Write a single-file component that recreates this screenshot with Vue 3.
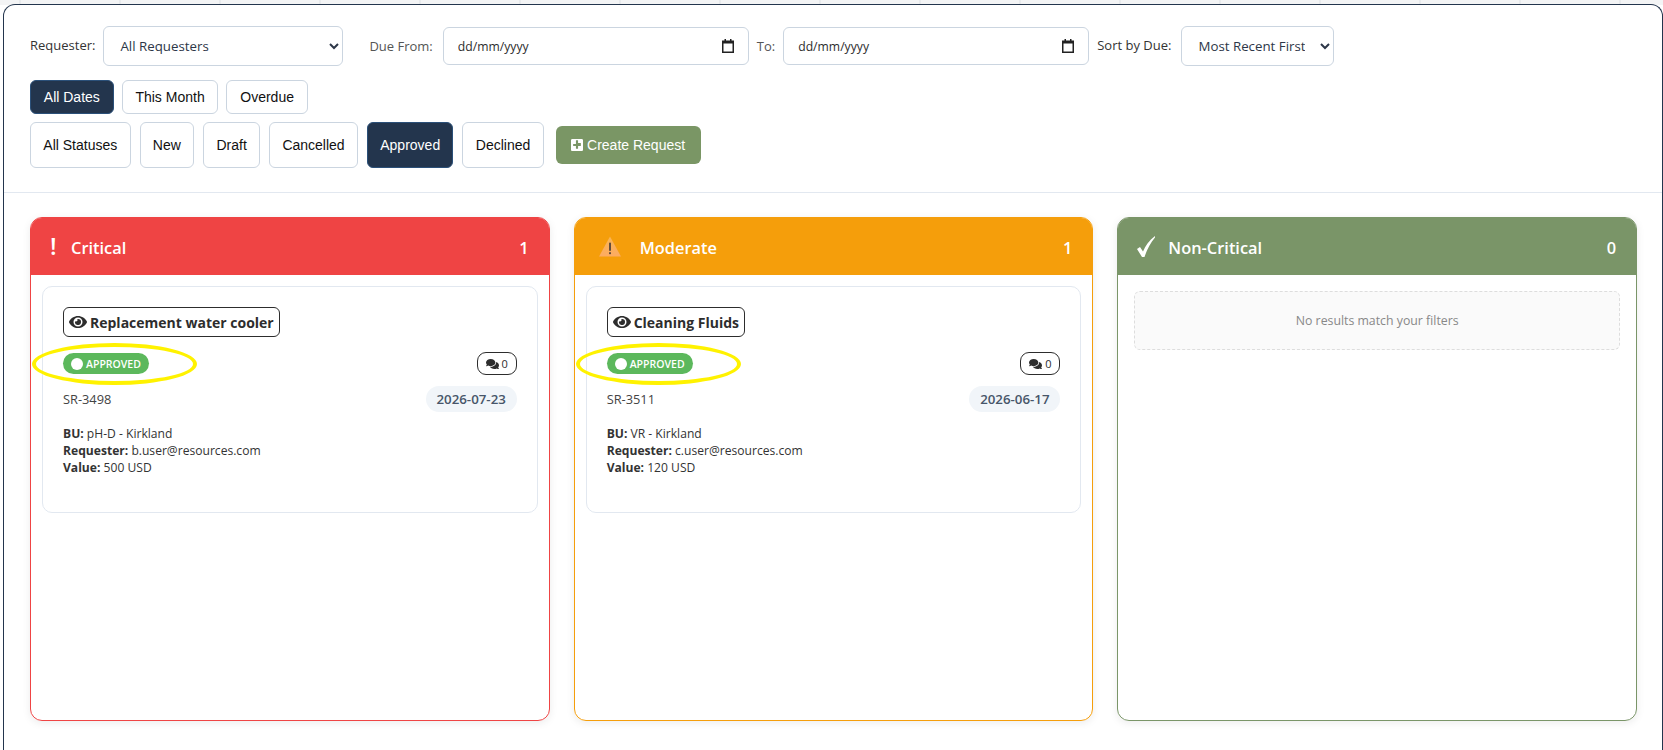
<template>
  <div class="panel">
    <div class="filters">
      <div class="filter-row top">
        <label class="lbl">Requester:</label>
        <select class="sel sel-req">
          <option>All Requesters</option>
        </select>
        <label class="lbl lbl-low due-from">Due From:</label>
        <div class="date-field">
          <input class="date-text" type="text" placeholder="dd/mm/yyyy" />
          <svg class="cal" viewBox="0 0 12 14" width="12" height="14">
            <path d="M2.5 0h1.5v1.500h4V0h1.500v1.500H12V14H0V1.500h2.500zM1.500 4.500V12.500h9V4.500z" fill="#222" />
          </svg>
        </div>
        <label class="lbl lbl-low to">To:</label>
        <div class="date-field">
          <input class="date-text" type="text" placeholder="dd/mm/yyyy" />
          <svg class="cal" viewBox="0 0 12 14" width="12" height="14">
            <path d="M2.5 0h1.5v1.500h4V0h1.500v1.500H12V14H0V1.500h2.500zM1.500 4.500V12.500h9V4.500z" fill="#222" />
          </svg>
        </div>
        <label class="lbl sort">Sort by Due:</label>
        <select class="sel sel-sort">
          <option>Most Recent First</option>
        </select>
      </div>

      <div class="filter-row dates">
        <button v-for="d in dateFilters" :key="d" class="chip" :class="{ active: d === 'All Dates' }">{{ d }}</button>
      </div>

      <div class="filter-row statuses">
        <button v-for="s in statusFilters" :key="s" class="chip tall" :class="{ active: s === 'Approved' }">{{ s }}</button>
        <button class="create">
          <svg viewBox="0 0 448 512" width="12" height="14">
            <path fill="#fff" d="M400 32H48C21.5 32 0 53.5 0 80v352c0 26.5 21.5 48 48 48h352c26.5 0 48-21.5 48-48V80c0-26.5-21.5-48-48-48zm-32 252c0 6.6-5.4 12-12 12h-92v92c0 6.6-5.4 12-12 12h-56c-6.6 0-12-5.4-12-12v-92H92c-6.6 0-12-5.4-12-12v-56c0-6.6 5.4-12 12-12h92V92c0-6.6 5.4-12 12-12h56c6.6 0 12 5.4 12 12v92h92c6.6 0 12 5.4 12 12v56z" />
          </svg>
          Create Request
        </button>
      </div>
    </div>

    <div class="board">
      <section v-for="col in columns" :key="col.name" class="column" :class="col.cls">
        <header class="col-head">
          <div class="col-title">
            <span v-if="col.cls === 'critical'" class="bang">!</span>
            <svg v-else-if="col.cls === 'moderate'" class="warn" viewBox="0 0 24 22" width="24" height="21">
              <defs>
                <linearGradient id="warnFill" x1="0" y1="0" x2="0" y2="1">
                  <stop offset="0" stop-color="#f9b552" />
                  <stop offset="1" stop-color="#fdab62" />
                </linearGradient>
              </defs>
              <path d="M12 0.500L23.500 21.500H0.500z" fill="url(#warnFill)" />
              <rect x="11" y="7" width="2" height="8.500" fill="#5c4a3a" />
              <rect x="11" y="17" width="2" height="2" fill="#5c4a3a" />
            </svg>
            <svg v-else class="check" viewBox="0 0 18 21" width="18" height="21">
              <path fill="#fff" d="M0 13L3 11L6 15.500C8.500 9.500 12 4.500 18 0L18 1.500C13.500 7 10 13.500 7.500 21L5 21z" />
            </svg>
            <span class="col-name">{{ col.name }}</span>
          </div>
          <span class="col-count">{{ col.items.length }}</span>
        </header>

        <div class="col-body">
          <article v-for="item in col.items" :key="item.id" class="card">
            <button class="title-btn">
              <svg viewBox="0 0 576 512" width="18" height="16">
                <path fill="#2d2d2d" d="M572.52 241.4C518.29 135.59 410.93 64 288 64S57.68 135.64 3.48 241.41a32.35 32.35 0 0 0 0 29.19C57.71 376.41 165.07 448 288 448s230.32-71.64 284.52-177.41a32.35 32.35 0 0 0 0-29.19zM288 400a144 144 0 1 1 144-144 143.93 143.93 0 0 1-144 144zm0-240a95.31 95.31 0 0 0-25.31 3.79 47.85 47.85 0 0 1-66.9 66.9A95.78 95.78 0 1 0 288 160z" />
              </svg>
              {{ item.title }}
            </button>

            <div class="status-row">
              <div class="ring-wrap">
                <span class="ring"></span>
                <span class="pill"><i class="dot"></i>APPROVED</span>
              </div>
              <span class="comments">
                <svg viewBox="0 0 576 512" width="13" height="12">
                  <path fill="#2d2d2d" d="M416 192c0-88.400-93.100-160-208-160S0 103.600 0 192c0 34.300 14.100 65.900 38 92-13.400 30.200-35.500 54.200-35.800 54.500-2.200 2.300-2.800 5.700-1.500 8.700S4.800 352 8 352c36.600 0 66.900-12.300 88.700-25 32.200 15.700 70.300 25 111.300 25 114.900 0 208-71.600 208-160zm122 220c23.900-26 38-57.700 38-92 0-66.900-53.500-124.200-129.300-148.100.9 6.600 1.300 13.300 1.300 20.100 0 105.900-107.700 192-240 192-10.800 0-21.300-.8-31.700-1.900C207.800 439.600 281.800 480 368 480c41 0 79.100-9.200 111.300-25 21.800 12.700 52.100 25 88.700 25 3.200 0 6.100-1.900 7.300-4.800 1.300-2.900.7-6.300-1.500-8.700-.3-.3-22.400-24.200-35.800-54.500z" />
                </svg>
                0
              </span>
            </div>

            <div class="id-row">
              <span class="sr">{{ item.id }}</span>
              <span class="due">{{ item.due }}</span>
            </div>

            <div class="meta">
              <div><b>BU:</b> {{ item.bu }}</div>
              <div><b>Requester:</b> {{ item.requester }}</div>
              <div><b>Value:</b> {{ item.value }}</div>
            </div>
          </article>

          <div v-if="!col.items.length" class="empty">No results match your filters</div>
        </div>
      </section>
    </div>
  </div>
</template>

<script setup>
const dateFilters = ['All Dates', 'This Month', 'Overdue'];
const statusFilters = ['All Statuses', 'New', 'Draft', 'Cancelled', 'Approved', 'Declined'];

const columns = [
  {
    name: 'Critical',
    cls: 'critical',
    items: [
      {
        id: 'SR-3498',
        title: 'Replacement water cooler',
        due: '2026-07-23',
        bu: 'pH-D - Kirkland',
        requester: 'b.user@resources.com',
        value: '500 USD'
      }
    ]
  },
  {
    name: 'Moderate',
    cls: 'moderate',
    items: [
      {
        id: 'SR-3511',
        title: 'Cleaning Fluids',
        due: '2026-06-17',
        bu: 'VR - Kirkland',
        requester: 'c.user@resources.com',
        value: '120 USD'
      }
    ]
  },
  { name: 'Non-Critical', cls: 'noncritical', items: [] }
];
</script>

<style>
html,
body {
  margin: 0;
  height: 100%;
  overflow: hidden;
}

body {
  background: repeating-linear-gradient(90deg, #f3f4f5 0 19px, #e8eaec 19px 21px, #f3f4f5 21px 100px) 0 0 / 100% 5px no-repeat, #fff;
}
</style>

<style scoped>
.panel {
  box-sizing: border-box;
  height: 746px;
  margin: 4px 0 0 3px;
  border: 1px solid #23354d;
  border-bottom: 0;
  border-radius: 12px 12px 0 0;
  background: #fff;
  font-family: "Open Sans", "Noto Sans", sans-serif;
  color: #2d2d2d;
}

.filters {
  padding: 21px 26px 24px;
  border-bottom: 1px solid #e2e8f0;
}

.filter-row {
  display: flex;
  align-items: center;
}

.top {
  height: 40px;
}

.lbl {
  font-size: 13px;
  color: #333;
  margin-right: 8px;
  margin-bottom: 2px;
}

.lbl-low {
  color: #555;
  margin-bottom: 0;
}

.due-from {
  margin-left: 26px;
  margin-right: 10px;
}

.to {
  margin-left: 8px;
}

.sort {
  margin-left: 8px;
  margin-right: 10px;
}

.sel {
  box-sizing: border-box;
  height: 40px;
  padding: 0 12px;
  border: 1px solid #cbd5e0;
  border-radius: 6px;
  background: #fff;
  font-family: inherit;
  font-size: 13.3px;
  color: #2d3748;
}

.sel-req {
  width: 240px;
}

.sel-sort {
  width: 153px;
}

.date-field {
  box-sizing: border-box;
  display: flex;
  align-items: center;
  width: 306px;
  height: 38px;
  padding: 0 14px 0 14px;
  border: 1px solid #cbd5e0;
  border-radius: 6px;
}

.date-text {
  flex: 1;
  min-width: 0;
  padding: 0;
  border: 0;
  outline: 0;
  font-family: inherit;
  font-size: 12.2px;
}

.date-text::placeholder {
  color: #2d2d2d;
  opacity: 1;
}

.dates {
  gap: 8px;
  margin-top: 14px;
}

.statuses {
  gap: 9px;
  margin-top: 8px;
}

.chip {
  box-sizing: border-box;
  height: 34px;
  padding: 0 12.8px;
  border: 1px solid #cbd5e0;
  border-radius: 6px;
  background: #fff;
  font-family: "Liberation Sans", Arial, sans-serif;
  font-size: 14px;
  color: #111;
}

.chip.tall {
  height: 46px;
  padding: 0 12.3px;
}

.chip.active {
  background: #23354d;
  border-color: #2b5079;
  color: #fff;
}

.create {
  display: flex;
  align-items: center;
  gap: 4px;
  box-sizing: border-box;
  height: 38px;
  margin-left: 3px;
  padding: 0 15.5px;
  border: 0;
  border-radius: 6px;
  background: #7a9665;
  font-family: "Liberation Sans", Arial, sans-serif;
  font-size: 14px;
  color: #fff;
}

.board {
  display: grid;
  grid-template-columns: repeat(3, 1fr);
  gap: 24px;
  padding: 24px 25px 0 26px;
}

.column {
  display: flex;
  flex-direction: column;
  box-sizing: border-box;
  height: 504px;
  border: 1px solid var(--accent);
  border-radius: 12px;
  box-shadow: 0 2px 8px rgba(0, 0, 0, 0.08);
  overflow: hidden;
}

.critical {
  --accent: #ef4444;
}

.moderate {
  --accent: #f59e0b;
}

.noncritical {
  --accent: #7a9568;
}

.col-head {
  display: flex;
  align-items: center;
  justify-content: space-between;
  box-sizing: border-box;
  height: 57px;
  padding: 2px 20px 0 19px;
  background: var(--accent);
  color: #fff;
  font-size: 16.4px;
  font-weight: 600;
}

.col-title {
  display: flex;
  align-items: center;
}

.bang {
  width: 21px;
  font-size: 24px;
  line-height: 1;
  margin-top: -4px;
  font-weight: 600;
  text-align: left;
}

.warn {
  margin-right: 18px;
  margin-left: 4px;
  margin-top: -2px;
}

.check {
  margin-right: 13px;
  margin-top: -3px;
}

.col-count {
  font-weight: 600;
}

.col-body {
  flex: 1;
  padding: 11px 11px;
}

.noncritical .col-body {
  padding: 16px;
}

.card {
  box-sizing: border-box;
  height: 227px;
  padding: 20px 20px 0;
  border: 1px solid #e2e8f0;
  border-radius: 10px;
  background: #fff;
}

.title-btn {
  display: inline-flex;
  align-items: center;
  gap: 3px;
  box-sizing: border-box;
  height: 30px;
  padding: 0 5px;
  border: 1px solid #2d2d2d;
  border-radius: 6px;
  background: #fff;
  font-family: inherit;
  font-size: 14px;
  font-weight: 700;
  color: #2d2d2d;
}

.status-row {
  display: flex;
  align-items: center;
  justify-content: space-between;
  margin-top: 15px;
  height: 23px;
}

.ring-wrap {
  position: relative;
  display: flex;
}

.ring {
  position: absolute;
  left: -31px;
  top: -10px;
  width: 165px;
  height: 42px;
  box-sizing: border-box;
  border: 4px solid #fff200;
  border-radius: 50%;
}

.pill {
  position: relative;
  display: inline-flex;
  align-items: center;
  gap: 3px;
  height: 21px;
  padding: 0 8px;
  border-radius: 11px;
  background: #5cb85c;
  color: #fff;
  font-size: 10.5px;
  font-weight: 600;
}

.dot {
  width: 12px;
  height: 12px;
  border-radius: 50%;
  background: #fff;
}

.comments {
  display: inline-flex;
  align-items: center;
  justify-content: center;
  gap: 3px;
  box-sizing: border-box;
  width: 40px;
  height: 23px;
  border: 1px solid #2d2d2d;
  border-radius: 9px;
  font-size: 11px;
}

.id-row {
  display: flex;
  align-items: center;
  justify-content: space-between;
  margin-top: 11px;
  font-size: 12.8px;
}

.sr {
  color: #444;
}

.due {
  display: inline-flex;
  align-items: center;
  justify-content: center;
  width: 91px;
  height: 26px;
  border-radius: 13px;
  background: #f1f5f9;
  color: #475569;
  font-size: 13.3px;
  font-weight: 600;
}

.meta {
  margin-top: 13px;
  font-size: 12.1px;
  line-height: 17px;
  color: #333;
}

.empty {
  box-sizing: border-box;
  display: flex;
  align-items: center;
  justify-content: center;
  height: 59px;
  border: 1px dashed #ddd;
  border-radius: 6px;
  background: #fafafa;
  font-size: 12.3px;
  color: #888;
}
</style>
